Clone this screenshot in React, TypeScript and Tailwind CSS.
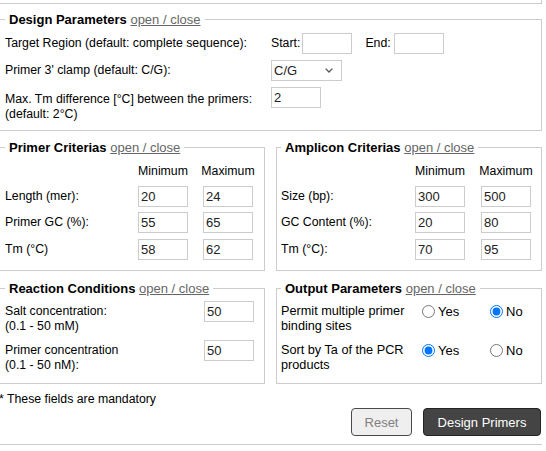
import { useState } from "react";

const inputCls =
  "h-[21px] w-[50px] border border-[#cccccc] bg-white pl-[2px] text-[13px] leading-[15px] text-[#222] outline-none";

function Legend({ title }: { title: string }) {
  return (
    <legend className="px-[4px] text-[13px] leading-[15px]">
      <span className="font-bold text-black">{title}</span>{" "}
      <a href="#" className="text-[#666] underline">
        open / close
      </a>
    </legend>
  );
}

function MinMaxRows({ rows, labelCol, gap }: { rows: [string, string, string][]; labelCol: string; gap: string }) {
  return (
    <div>
      <div className={`grid ${labelCol} ${gap} h-[15px]`}>
        <div />
        <div className="flex justify-center whitespace-nowrap">Minimum</div>
        <div className="flex justify-center whitespace-nowrap">Maximum</div>
      </div>
      {rows.map(([label, min, max], i) => (
        <div
          key={label}
          className={`grid ${labelCol} ${gap} items-center ${i === 0 ? "mt-[7px]" : i === 1 ? "mt-[5px]" : "mt-[6px]"}`}
        >
          <div>{label}</div>
          <input className={inputCls} defaultValue={min} />
          <input className={inputCls} defaultValue={max} />
        </div>
      ))}
    </div>
  );
}

function RadioPair({ name, value }: { name: string; value: "yes" | "no" }) {
  const [v, setV] = useState(value);
  return (
    <div className="flex h-[15px] items-center text-[13px]">
      <label className="flex w-[68px] shrink-0 items-center">
        <input
          type="radio"
          name={name}
          checked={v === "yes"}
          onChange={() => setV("yes")}
          className="ml-[3px] h-[13px] w-[13px]"
        />
        <span className="ml-[3px]">Yes</span>
      </label>
      <label className="flex items-center">
        <input
          type="radio"
          name={name}
          checked={v === "no"}
          onChange={() => setV("no")}
          className="ml-[3px] h-[13px] w-[13px]"
        />
        <span className="ml-[3px]">No</span>
      </label>
    </div>
  );
}

export default function App() {
  return (
    <div className="h-[451px] w-[546px] overflow-hidden bg-white font-['Liberation_Sans',Arial,sans-serif] text-[12.3px] leading-[15px] text-black">
      <div className="-ml-[1px] w-[543px]">
        {/* tail of the box above */}
        <div className="h-[4px] border-b border-r border-[#cccccc]" />

        {/* Design Parameters */}
        <fieldset className="mt-[8px] border border-[#cccccc] pb-[8px] pl-[5px] pt-[6px]">
          <Legend title="Design Parameters" />
          <div className="flex h-[21px] items-center">
            <span className="w-[266px] shrink-0">Target Region (default: complete sequence):</span>
            <span>Start:</span>
            <input className={`${inputCls} ml-[2px]`} />
            <span className="ml-[13px]">End:</span>
            <input className={`${inputCls} ml-[3px]`} />
          </div>
          <div className="mt-[6px] flex h-[21px] items-center">
            <span className="w-[266px] shrink-0">Primer 3' clamp (default: C/G):</span>
            <div className="relative">
              <select
                defaultValue="C/G"
                className="h-[21px] w-[71px] appearance-none border border-[#cccccc] bg-white pl-[2px] text-[13px] text-[#222] outline-none"
              >
                <option>C/G</option>
                <option>A/T</option>
                <option>none</option>
              </select>
              <svg
                viewBox="0 0 8 5"
                className="pointer-events-none absolute right-[9px] top-[8px] h-[5px] w-[8px]"
                fill="none"
                stroke="#555"
                strokeWidth="1.3"
              >
                <path d="M0.6 0.6 L4 4 L7.4 0.6" />
              </svg>
            </div>
          </div>
          <div className="mt-[6px] flex items-start">
            <span className="w-[266px] shrink-0 pt-[5px]">
              Max. Tm difference [°C] between the primers:
              <br />
              (default: 2°C)
            </span>
            <input className={inputCls} defaultValue="2" />
          </div>
        </fieldset>

        {/* Primer / Amplicon */}
        <div className="mt-[9px] flex gap-[11px]">
          <fieldset className="w-[266px] shrink-0 border border-[#cccccc] pb-[10px] pl-[5px] pt-[9px]">
            <Legend title="Primer Criterias" />
            <MinMaxRows
              labelCol="grid-cols-[118px_50px_50px]"
              gap="gap-x-[15px]"
              rows={[
                ["Length (mer):", "20", "24"],
                ["Primer GC (%):", "55", "65"],
                ["Tm (°C)", "58", "62"],
              ]}
            />
          </fieldset>
          <fieldset className="w-[266px] shrink-0 border border-[#cccccc] pb-[10px] pl-[4px] pt-[9px]">
            <Legend title="Amplicon Criterias" />
            <MinMaxRows
              labelCol="grid-cols-[118px_50px_50px]"
              gap="gap-x-[16px]"
              rows={[
                ["Size (bp):", "300", "500"],
                ["GC Content (%):", "20", "80"],
                ["Tm (°C):", "70", "95"],
              ]}
            />
          </fieldset>
        </div>

        {/* Reaction / Output */}
        <div className="mt-[10px] flex gap-[11px]">
          <fieldset className="w-[266px] shrink-0 border border-[#cccccc] pb-[10px] pl-[5px] pr-[10px] pt-[5px]">
            <Legend title="Reaction Conditions" />
            <div className="flex items-start justify-between">
              <span className="pt-[3px]">
                Salt concentration:
                <br />
                (0.1 - 50 mM)
              </span>
              <input className={inputCls} defaultValue="50" />
            </div>
            <div className="mt-[6px] flex items-start justify-between">
              <span className="pt-[3px]">
                Primer concentration
                <br />
                (0.1 - 50 nM):
              </span>
              <input className={inputCls} defaultValue="50" />
            </div>
          </fieldset>
          <fieldset className="w-[266px] shrink-0 border border-[#cccccc] pb-[10px] pl-[4px] pt-[5px]">
            <Legend title="Output Parameters" />
            <div className="flex items-start pt-[3px]">
              <span className="w-[138px] shrink-0 text-[12.7px]">
                Permit multiple primer
                <br />
                binding sites
              </span>
              <RadioPair name="multi" value="no" />
            </div>
            <div className="mt-[6px] flex items-start pt-[3px]">
              <span className="w-[138px] shrink-0 text-[12.7px]">
                Sort by Ta of the PCR
                <br />
                products
              </span>
              <RadioPair name="sortta" value="yes" />
            </div>
          </fieldset>
        </div>

        <div className="mt-[8px]">* These fields are mandatory</div>

        <div className="mt-[1px] flex justify-end gap-[11px] pr-[1px]">
          <button className="h-[28px] w-[61px] rounded-[4px] border border-[#4a4a4a] bg-[#efefef] text-[13px] text-[#808080]">
            Reset
          </button>
          <button className="h-[28px] w-[118px] rounded-[4px] border border-[#222] bg-[#444444] text-[13px] text-white">
            Design Primers
          </button>
        </div>

        <div className="mt-[8px] border-t border-[#cccccc]" />
      </div>
    </div>
  );
}
